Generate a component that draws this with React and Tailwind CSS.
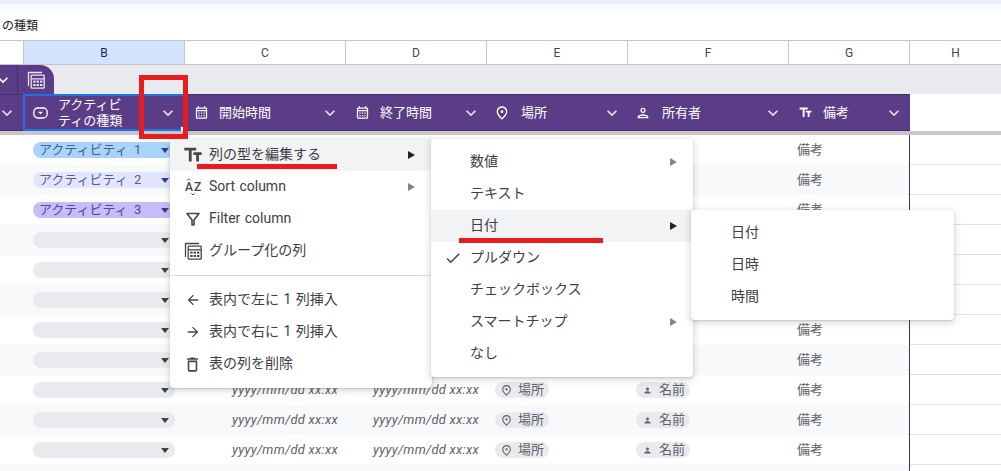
import {
  MdArrowBack,
  MdArrowForward,
  MdCheck,
  MdExpandMore,
  MdOutlineCalendarMonth,
  MdOutlineDelete,
  MdOutlinePerson,
  MdOutlinePlace,
  MdPerson,
  MdTextFields,
} from 'react-icons/md'

const COLS = 'grid grid-cols-[23px_162px_161px_141px_141px_161px_121px_91px]'
const LETTER_COLS = 'grid grid-cols-[23px_161px_161px_141px_141px_161px_121px_92px]'

const LETTERS = ['', 'B', 'C', 'D', 'E', 'F', 'G', 'H']

const ACTIVITY_CHIPS = [
  { label: 'アクティビティ 1', chip: 'bg-[#a8d4fb]', text: 'text-[#43608f]', caret: 'border-t-[#3b3a8c]' },
  { label: 'アクティビティ 2', chip: 'bg-[#e1e6fd]', text: 'text-[#565c92]', caret: 'border-t-[#3b3a8c]' },
  { label: 'アクティビティ 3', chip: 'bg-[#c5bdf9]', text: 'text-[#4f4794]', caret: 'border-t-[#3b3a8c]' },
]

const ROW_COUNT = 11

function TableCalcIcon({ size = 18 }) {
  return (
    <svg width={size} height={size} viewBox="0 0 18 18" fill="none" stroke="currentColor">
      <path d="M1.5 15V1.5H15" strokeWidth="1.3" />
      <rect x="4.2" y="4.2" width="13" height="13" rx="0.8" strokeWidth="1.3" />
      <path d="M4.2 7.8h13" strokeWidth="1.3" />
      <g fill="currentColor" stroke="none">
        <rect x="6.2" y="9.6" width="2.4" height="2" />
        <rect x="9.6" y="9.6" width="2.4" height="2" />
        <rect x="13" y="9.6" width="2.4" height="2" />
        <rect x="6.2" y="13" width="2.4" height="2" />
        <rect x="9.6" y="13" width="2.4" height="2" />
        <rect x="13" y="13" width="2.4" height="2" />
      </g>
    </svg>
  )
}

function ChipIcon() {
  return (
    <svg width="15" height="12" viewBox="0 0 15 12" fill="none">
      <rect x="0.8" y="1" width="13.4" height="10" rx="4" stroke="currentColor" strokeWidth="1.3" />
      <path d="M5 4.8h5L7.5 7.2z" fill="currentColor" />
    </svg>
  )
}

function SortIcon() {
  return (
    <svg width="18" height="20" viewBox="0 0 18 20" fill="none" stroke="currentColor">
      <path d="M3 3.4l1.6-1.6 1.6 1.6" strokeWidth="1" />
      <text x="1" y="14" fontSize="12" fontWeight="500" fontFamily="Roboto" fill="currentColor" stroke="none">A</text>
      <text x="10" y="14" fontSize="12" fontWeight="500" fontFamily="Roboto" fill="currentColor" stroke="none">Z</text>
      <path d="M7.4 16.4l1.6 1.6 1.6-1.6" strokeWidth="1" />
    </svg>
  )
}

function FunnelIcon() {
  return (
    <svg width="16" height="16" viewBox="0 0 16 16" fill="none" stroke="currentColor" strokeWidth="1.6">
      <path d="M2 2.5h12L9 9v5H7V9z" strokeLinejoin="round" />
    </svg>
  )
}

function Caret({ color = 'border-t-[#3c4043]' }) {
  return (
    <span className={`h-0 w-0 border-x-[4.5px] border-t-[5px] border-x-transparent ${color}`} />
  )
}

function SubArrow({ active }) {
  return (
    <span
      className={`h-0 w-0 border-y-[4px] border-l-[7px] border-y-transparent ${
        active ? 'border-l-[#202124]' : 'border-l-[#80868b]'
      }`}
    />
  )
}

function HeaderCell({ icon, children, selected }) {
  return (
    <div
      className={`flex items-center bg-[#5a3d86] text-[13px] text-white ${
        selected
          ? 'relative border-2 border-[#1a73e8] pr-[5px] pl-[7px]'
          : 'border-y border-[#44306c] pr-[6px] pl-[8px]'
      }`}
    >
      <span className="flex w-[26px] shrink-0 items-center pl-[1px]">{icon}</span>
      <span className="leading-[16px]">{children}</span>
      <MdExpandMore size={20} className="ml-auto shrink-0 text-[#e8e4f0]" />
      {selected && (
        <span className="absolute -right-[2px] -bottom-[2px] h-[5px] w-[5px] border-t border-l border-[#1a73e8] bg-white" />
      )}
    </div>
  )
}

function GrayChip({ icon, children }) {
  return (
    <span className="ml-2 flex h-[16px] w-[54px] items-center gap-[5px] rounded-full bg-[#e8eaed] pl-[5px] text-[13px] text-[#5f6368]">
      <span className="flex w-[13px] justify-center">{icon}</span>
      {children}
    </span>
  )
}

function Row({ index }) {
  const activity = ACTIVITY_CHIPS[index]
  const bg = index % 2 === 0 ? 'bg-white' : 'bg-[#f8f9fa]'
  const dateCell = (
    <span className="w-full pr-[8px] text-right text-[13px] tracking-[0.25px] text-[#5f6368] italic">
      yyyy/mm/dd xx:xx
    </span>
  )
  return (
    <div className={`${COLS} h-[30px]`}>
      <div className={bg} />
      <div className={`flex items-center pl-[10px] ${bg}`}>
        <div
          className={`flex h-[16px] w-[142px] items-center justify-between rounded-full pr-[6px] pl-[6px] text-[13px] [word-spacing:3px] ${
            activity ? `${activity.chip} ${activity.text}` : 'bg-[#e8eaed]'
          }`}
        >
          <span>{activity?.label}</span>
          <Caret color={activity?.caret} />
        </div>
      </div>
      <div className={`flex items-center ${bg}`}>{dateCell}</div>
      <div className={`flex items-center ${bg}`}>{dateCell}</div>
      <div className={`flex items-center ${bg}`}>
        <GrayChip icon={<MdOutlinePlace size={13} />}>場所</GrayChip>
      </div>
      <div className={`flex items-center ${bg}`}>
        <GrayChip icon={<MdPerson size={9} />}>名前</GrayChip>
      </div>
      <div className={`flex items-center border-r border-[#3f3160] pl-2 text-[13px] text-[#5f6368] ${bg}`}>
        備考
      </div>
      <div className="border-b border-[#e0e0e0] bg-white" />
    </div>
  )
}

function MenuItem({ icon, label, arrow, active, hover, iconWidth, arrowGap = 'mr-4' }) {
  return (
    <div
      className={`flex h-[32px] items-center text-[14px] text-[#3c4043] [word-spacing:1px] ${hover ? 'bg-[#f1f3f4]' : ''}`}
    >
      <span className={`flex shrink-0 items-center justify-center text-[#444746] ${iconWidth}`}>{icon}</span>
      <span className="-translate-y-[1px]">{label}</span>
      {arrow && (
        <span className={`ml-auto flex ${arrowGap}`}>
          <SubArrow active={active} />
        </span>
      )}
    </div>
  )
}

const MENU_SHADOW = 'rounded-[4px] bg-white shadow-[0_2px_6px_2px_rgba(60,64,67,0.15),0_1px_2px_rgba(60,64,67,0.2)]'

function ColumnMenu() {
  const w = 'w-[39px] pl-[6px]'
  const gap = 'mr-[17px]'
  return (
    <div className={`absolute top-[139px] left-[170px] z-10 w-[262px] pb-2 ${MENU_SHADOW}`}>
      <MenuItem icon={<MdTextFields size={22} />} label="列の型を編集する" arrow active hover iconWidth={w} arrowGap={gap} />
      <MenuItem icon={<SortIcon />} label="Sort column" arrow iconWidth={w} arrowGap={gap} />
      <MenuItem icon={<FunnelIcon />} label="Filter column" iconWidth={w} />
      <MenuItem icon={<TableCalcIcon />} label="グループ化の列" iconWidth={w} />
      <div className="mt-2 mb-2 border-t border-[#dadce0]" />
      <MenuItem icon={<MdArrowBack size={16} />} label="表内で左に 1 列挿入" iconWidth={w} />
      <MenuItem icon={<MdArrowForward size={16} />} label="表内で右に 1 列挿入" iconWidth={w} />
      <MenuItem icon={<MdOutlineDelete size={19} />} label="表の列を削除" iconWidth={w} />
    </div>
  )
}

function TypeMenu() {
  const w = 'w-[39px] pl-[4px]'
  return (
    <div className={`absolute top-[139px] left-[431px] z-20 w-[262px] py-[7px] ${MENU_SHADOW}`}>
      <MenuItem label="数値" arrow iconWidth={w} />
      <MenuItem label="テキスト" iconWidth={w} />
      <MenuItem label="日付" arrow active hover iconWidth={w} />
      <MenuItem icon={<MdCheck size={18} />} label="プルダウン" iconWidth={w} />
      <MenuItem label="チェックボックス" iconWidth={w} />
      <MenuItem label="スマートチップ" arrow iconWidth={w} />
      <MenuItem label="なし" iconWidth={w} />
    </div>
  )
}

function DateMenu() {
  return (
    <div className={`absolute top-[210px] left-[691px] z-30 w-[263px] py-[7px] ${MENU_SHADOW}`}>
      <MenuItem label="日付" iconWidth="w-[40px]" />
      <MenuItem label="日時" iconWidth="w-[40px]" />
      <MenuItem label="時間" iconWidth="w-[40px]" />
    </div>
  )
}

export default function App() {
  return (
    <div className="relative h-[471px] w-[1001px] overflow-hidden bg-white font-['Roboto','Noto_Sans_CJK_JP',sans-serif]">
      {/* Browser chrome remains */}
      <div className="h-[4px] bg-[#e9f0f8]" />
      <div className="h-[8px] bg-[#f9fbfd]" />

      {/* Formula bar */}
      <div className="flex h-[28px] items-center pl-[2px] text-[12px] text-[#202124]">の種類</div>

      {/* Column letters */}
      <div className={`${LETTER_COLS} h-[25px] border-y border-[#c4c7c5] text-[12px] text-[#444746]`}>
        {LETTERS.map((letter, i) => (
          <div
            key={i}
            className={`flex items-center justify-center border-l border-[#c4c7c5] first:border-l-0 ${
              letter === 'B' ? 'bg-[#d3e3fd] text-[#0b2a66]' : ''
            }`}
          >
            {letter}
          </div>
        ))}
      </div>

      {/* Table tabs */}
      <div className="flex h-[29px] bg-[#e8eaed]">
        <div className="flex w-[54px] overflow-hidden rounded-tr-[14px] bg-[#5a3d86] text-white">
          <div className="flex w-[18px] items-center border-r border-[#44306c]">
            <MdExpandMore size={20} className="-ml-[7px] shrink-0" />
          </div>
          <div className="flex flex-1 items-center justify-center pr-[1px] text-[#e8e4f0]">
            <TableCalcIcon />
          </div>
        </div>
      </div>

      {/* Header row */}
      <div className={`${COLS} h-[37px]`}>
        <div className="flex items-center overflow-hidden border-y border-[#44306c] bg-[#5a3d86] text-[#e8e4f0]">
          <MdExpandMore size={20} className="-ml-[3px] shrink-0" />
        </div>
        <HeaderCell icon={<ChipIcon />} selected>
          アクティビ
          <br />
          ティの種類
        </HeaderCell>
        <HeaderCell icon={<MdOutlineCalendarMonth size={15} />}>開始時間</HeaderCell>
        <HeaderCell icon={<MdOutlineCalendarMonth size={15} />}>終了時間</HeaderCell>
        <HeaderCell icon={<MdOutlinePlace size={16} className="-ml-[2px]" />}>場所</HeaderCell>
        <HeaderCell icon={<MdOutlinePerson size={16} className="-ml-[2px]" />}>所有者</HeaderCell>
        <HeaderCell icon={<MdTextFields size={15} />}>備考</HeaderCell>
        <div className="bg-white" />
      </div>
      <div className="h-[4px] bg-[#c7c7c7]" />

      {/* Rows */}
      {Array.from({ length: ROW_COUNT }, (_, i) => (
        <Row key={i} index={i} />
      ))}
      <div className="h-[6px] w-[910px] border-r border-[#3f3160] bg-[#f8f9fa]" />

      <ColumnMenu />
      <TypeMenu />
      <DateMenu />

      {/* Red annotations */}
      <div className="absolute top-[75px] left-[139px] z-40 h-[64px] w-[49px] border-[5px] border-[#e81c1f]" />
      <div className="absolute top-[164px] left-[197px] z-40 h-[5px] w-[140px] bg-[#e81c1f]" />
      <div className="absolute top-[238px] left-[459px] z-40 h-[5px] w-[144px] bg-[#e81c1f]" />
    </div>
  )
}
